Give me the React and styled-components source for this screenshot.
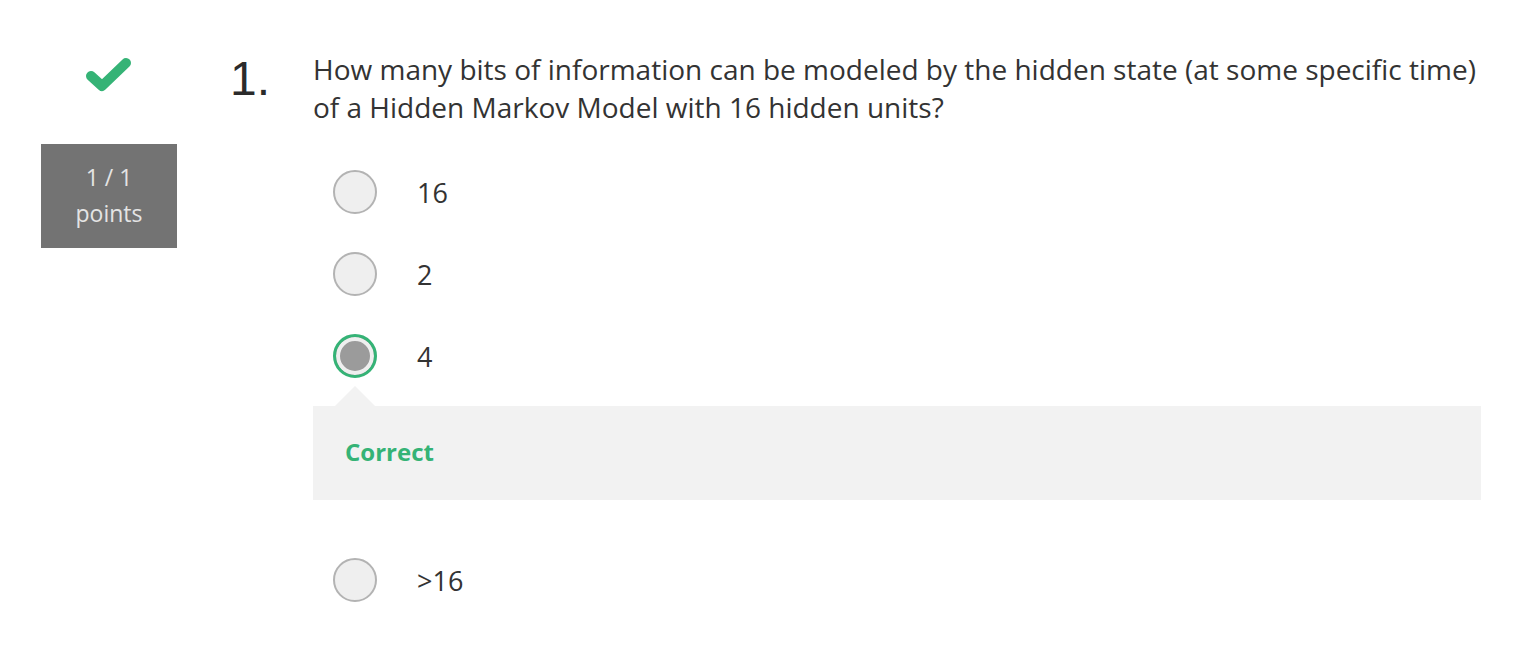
import React from 'react';
import styled, { createGlobalStyle } from 'styled-components';

const GlobalStyle = createGlobalStyle`
  body {
    margin: 0;
    background: #fff;
    font-family: "Open Sans", "Liberation Sans", sans-serif;
    color: #333;
  }
`;

const GREEN = '#35b376';

const Page = styled.div`
  display: flex;
  padding-top: 50px;
`;

const Aside = styled.div`
  width: 218px;
  flex-shrink: 0;
  display: flex;
  flex-direction: column;
  align-items: center;
`;

const CheckMark = styled.svg`
  margin-top: 4px;
  margin-left: -2px;
`;

const PointsBox = styled.div`
  margin-top: 50px;
  width: 136px;
  padding: 15px 0 17px;
  background-color: #737373;
  color: #e4e4e4;
  font-size: 23px;
  line-height: 36px;
  text-align: center;
`;

const Number = styled.div`
  width: 95px;
  flex-shrink: 0;
  margin-top: 5px;
  padding-left: 12px;
  box-sizing: border-box;
  font-family: "Liberation Sans", Arial, sans-serif;
  font-size: 48px;
  line-height: 48px;
  color: #2b2b2b;
`;

const Main = styled.div`
  flex: 1;
  margin-right: 53px;
`;

const Prompt = styled.div`
  font-size: 28px;
  line-height: 38px;
  color: #333;
`;

const OptionList = styled.div`
  margin-top: 44px;
  display: flex;
  flex-direction: column;
`;

const Option = styled.label`
  display: flex;
  align-items: center;
  height: 44px;
  margin-top: ${(p) => p.$gap}px;
  padding-left: 20px;
  font-size: 27px;
  color: #333;
`;

const Radio = styled.span`
  width: 44px;
  height: 44px;
  box-sizing: border-box;
  border-radius: 50%;
  flex-shrink: 0;
  margin-right: 40px;
  background-color: ${(p) => (p.$checked ? '#9b9b9b' : '#efefef')};
  border: ${(p) => (p.$checked ? `3px solid ${GREEN}` : '2px solid #b3b3b3')};
  box-shadow: ${(p) => (p.$checked ? 'inset 0 0 0 4px #efefef' : 'none')};
`;

const Feedback = styled.div`
  position: relative;
  margin-top: 28px;
  height: 94px;
  box-sizing: border-box;
  display: flex;
  align-items: center;
  padding: 0 0 4px 32px;
  background-color: #f2f2f2;
  color: ${GREEN};
  font-size: 24px;
  font-weight: 700;

  &::before {
    content: '';
    position: absolute;
    top: -20px;
    left: 22px;
    border-left: 20px solid transparent;
    border-right: 20px solid transparent;
    border-bottom: 20px solid #f2f2f2;
  }
`;

const options = [
  { label: '16', gap: 0 },
  { label: '2', gap: 38 },
  { label: '4', gap: 38, checked: true, feedback: 'Correct' },
  { label: '>16', gap: 58 },
];

export default function App() {
  return (
    <>
      <GlobalStyle />
      <Page>
        <Aside>
          <CheckMark width="48" height="40" viewBox="0 0 48 40">
            <polyline
              points="7,22 18,32 42,9"
              fill="none"
              stroke={GREEN}
              strokeWidth="10"
              strokeLinecap="round"
              strokeLinejoin="round"
            />
          </CheckMark>
          <PointsBox>
            <div>1 / 1</div>
            <div>points</div>
          </PointsBox>
        </Aside>
        <Number>1.</Number>
        <Main>
          <Prompt>
            How many bits of information can be modeled by the hidden state (at some specific time) of a Hidden
            Markov Model with 16 hidden units?
          </Prompt>
          <OptionList>
            {options.map((o) => (
              <React.Fragment key={o.label}>
                <Option $gap={o.gap}>
                  <Radio $checked={o.checked} />
                  {o.label}
                </Option>
                {o.feedback && <Feedback>{o.feedback}</Feedback>}
              </React.Fragment>
            ))}
          </OptionList>
        </Main>
      </Page>
    </>
  );
}
